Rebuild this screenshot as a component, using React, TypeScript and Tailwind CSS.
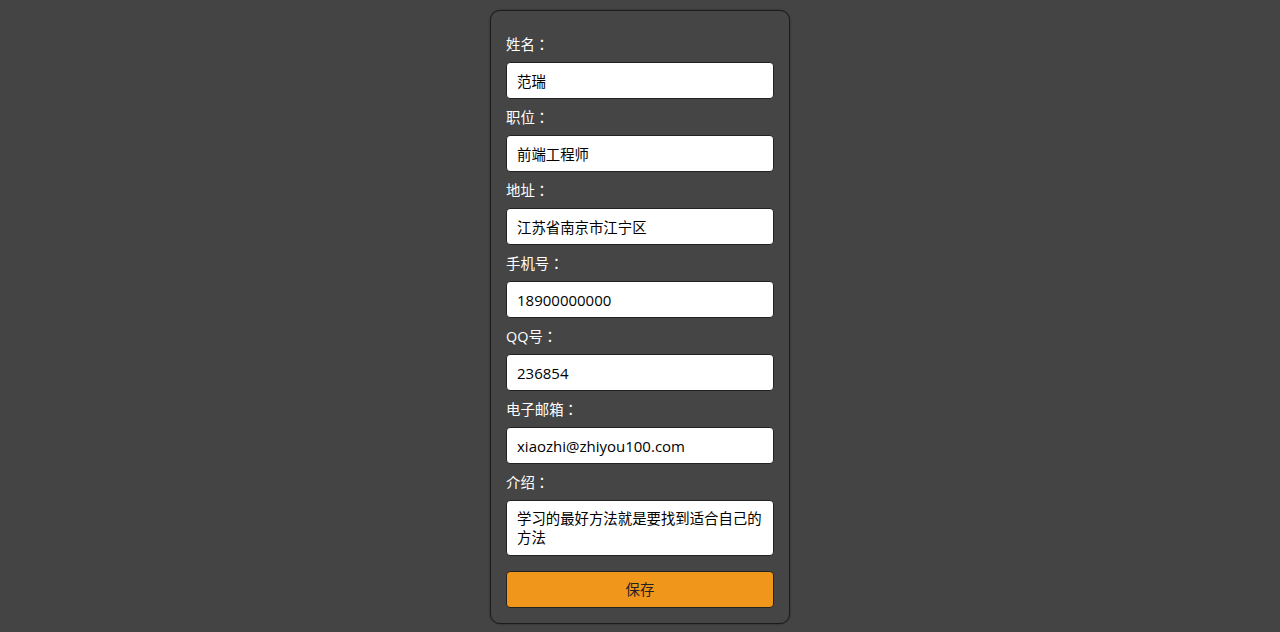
const fields = [
  { label: "姓名", value: "范瑞", latin: false },
  { label: "职位", value: "前端工程师", latin: false },
  { label: "地址", value: "江苏省南京市江宁区", latin: false },
  { label: "手机号", value: "18900000000", latin: true },
  { label: "QQ号", value: "236854", latin: true },
  { label: "电子邮箱", value: "xiaozhi@zhiyou100.com", latin: true },
];

const font = { fontFamily: '"Open Sans", "Noto Sans CJK SC", sans-serif' };

function Label({ text }: { text: string }) {
  return (
    <label className="mb-2 h-5 text-[14.4px] leading-5 text-white">
      {text}
      <span style={{ fontFamily: '"Noto Sans CJK TC", sans-serif' }}>：</span>
    </label>
  );
}

export default function App() {
  return (
    <div className="min-h-[632px] bg-[#444444] pt-[10px]" style={font}>
      <form
        className="mx-auto flex w-[300px] flex-col rounded-[10px] border border-[#1c1c1c] bg-[#454545] px-[15px] pb-[15px] pt-[23px] shadow-[0_0_2px_rgba(0,0,0,0.5)]"
        onSubmit={(e) => e.preventDefault()}
      >
        {fields.map((f) => (
          <div key={f.label} className="mb-2 flex flex-col">
            <Label text={f.label} />
            <input
              defaultValue={f.value}
              className={
                f.latin
                  ? "h-[37px] w-full rounded-[4px] border border-[#222] bg-white px-[10px] text-[15px] text-black outline-none"
                  : "h-[37px] w-full rounded-[4px] border border-[#222] bg-white px-[10px] text-[14.4px] text-black outline-none"
              }
            />
          </div>
        ))}
        <Label text="介绍" />
        <textarea
          defaultValue="学习的最好方法就是要找到适合自己的方法"
          className="h-[56px] w-full resize-none rounded-[4px] border border-[#222] bg-white px-[10px] py-[8px] text-[14.4px] leading-[19px] text-black outline-none"
        />
        <button
          type="submit"
          className="mt-[15px] h-[37px] w-full rounded-[4px] border border-[#222] bg-[#f0961a] text-[14.4px] text-[#222]"
        >
          保存
        </button>
      </form>
    </div>
  );
}
